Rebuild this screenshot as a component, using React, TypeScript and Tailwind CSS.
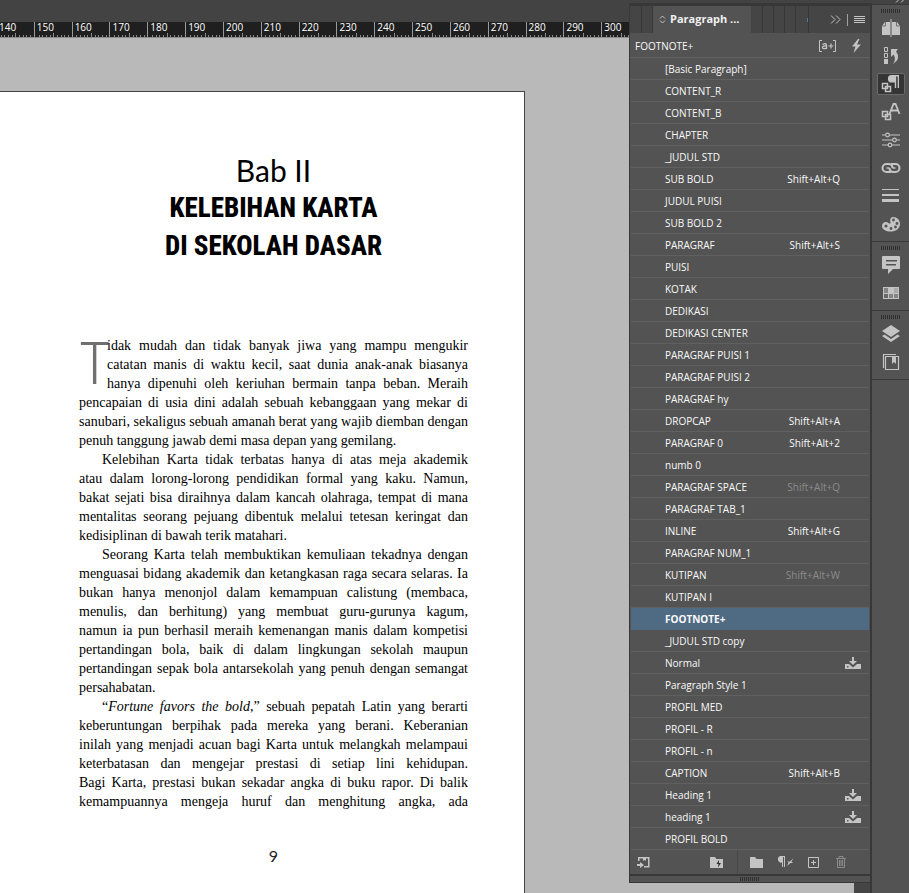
import { ReactNode } from "react";
import clsx from "clsx";

interface StyleItem {
  name: string;
  shortcut?: string;
  muted?: boolean;
  imported?: boolean;
}

const styles: StyleItem[] = [
  { name: "[Basic Paragraph]" },
  { name: "CONTENT_R" },
  { name: "CONTENT_B" },
  { name: "CHAPTER" },
  { name: "_JUDUL STD" },
  { name: "SUB BOLD", shortcut: "Shift+Alt+Q" },
  { name: "JUDUL PUISI" },
  { name: "SUB BOLD 2" },
  { name: "PARAGRAF", shortcut: "Shift+Alt+S" },
  { name: "PUISI" },
  { name: "KOTAK" },
  { name: "DEDIKASI" },
  { name: "DEDIKASI CENTER" },
  { name: "PARAGRAF PUISI 1" },
  { name: "PARAGRAF PUISI 2" },
  { name: "PARAGRAF hy" },
  { name: "DROPCAP", shortcut: "Shift+Alt+A" },
  { name: "PARAGRAF 0", shortcut: "Shift+Alt+2" },
  { name: "numb 0" },
  { name: "PARAGRAF SPACE", shortcut: "Shift+Alt+Q", muted: true },
  { name: "PARAGRAF TAB_1" },
  { name: "INLINE", shortcut: "Shift+Alt+G" },
  { name: "PARAGRAF NUM_1" },
  { name: "KUTIPAN", shortcut: "Shift+Alt+W", muted: true },
  { name: "KUTIPAN I" },
  { name: "FOOTNOTE+" },
  { name: "_JUDUL STD copy" },
  { name: "Normal", imported: true },
  { name: "Paragraph Style 1" },
  { name: "PROFIL MED" },
  { name: "PROFIL - R" },
  { name: "PROFIL - n" },
  { name: "CAPTION", shortcut: "Shift+Alt+B" },
  { name: "Heading 1", imported: true },
  { name: "heading 1", imported: true },
  { name: "PROFIL BOLD" },
];

const rulerMarks = [140, 150, 160, 170, 180, 190, 200, 210, 220, 230, 240, 250, 260, 270, 280, 290, 300];

interface ParagraphProps {
  lines: ReactNode[];
  // the page ends in the middle of the last paragraph
  continues?: boolean;
}

const Line = ({ children, last }: { children: ReactNode; last?: boolean }) => (
  <span className={clsx("block whitespace-nowrap", !last && "[text-align-last:justify]")}>
    {children}{" "}
  </span>
);

const Paragraph = ({ lines, continues }: ParagraphProps) => (
  <p className="indent-[23px]">
    {lines.map((line, i) => (
      <span key={i} className={clsx("block", i > 0 && "indent-0")}>
        <Line last={!continues && i === lines.length - 1}>{line}</Line>
      </span>
    ))}
  </p>
);

const Ruler = () => (
  <div className="h-4 border-b border-[#8c8c8c] bg-[#1f1f1f]">
    <div className="-ml-1 flex h-full w-[643px]">
      {rulerMarks.map((mark) => (
        <div key={mark} className="grid min-w-0 flex-1 border-l border-[#9a9a9a]">
          <span className="col-start-1 row-start-1 pl-0.5 text-[10px] leading-[11px] text-white">{mark}</span>
          <div className="col-start-1 row-start-1 grid grid-cols-10 items-end">
            {Array.from({ length: 10 }, (_, i) => (
              <i
                key={i}
                className={clsx("border-[#8c8c8c]", i > 0 && "border-l", i === 5 ? "h-1" : "h-0.5")}
              />
            ))}
          </div>
        </div>
      ))}
    </div>
  </div>
);

const BookPage = () => (
  <article className="mt-[53px] h-full w-[525px] border-t border-r border-[#444] bg-white pr-14 pl-[79px] text-black">
    <header className="pt-[59px] text-center">
      <p className="font-['Lato',sans-serif] text-[30px] leading-[38px]">Bab II</p>
      <h1 className="font-['Roboto_Condensed',Roboto,sans-serif] text-[27px] leading-[38px] font-extrabold">
        KELEBIHAN KARTA
        <br />
        DI SEKOLAH DASAR
      </h1>
    </header>
    <div className="mt-[71px] font-['Liberation_Serif',serif] text-[14px] leading-[19px]">
      <p>
        <span className="float-left h-[57px] w-7 font-['Roboto_Condensed',Roboto,sans-serif] text-[60px] leading-[55px] font-light text-[#707070]">
          T
        </span>
        <Line>idak mudah dan tidak banyak jiwa yang mampu mengukir</Line>
        <Line>catatan manis di waktu kecil, saat dunia anak-anak biasanya</Line>
        <Line>hanya dipenuhi oleh keriuhan bermain tanpa beban. Meraih</Line>
        <Line>pencapaian di usia dini adalah sebuah kebanggaan yang mekar di</Line>
        <Line>sanubari, sekaligus sebuah amanah berat yang wajib diemban dengan</Line>
        <Line last>penuh tanggung jawab demi masa depan yang gemilang.</Line>
      </p>
      <Paragraph
        lines={[
          "Kelebihan Karta tidak terbatas hanya di atas meja akademik",
          "atau dalam lorong-lorong pendidikan formal yang kaku. Namun,",
          "bakat sejati bisa diraihnya dalam kancah olahraga, tempat di mana",
          "mentalitas seorang pejuang dibentuk melalui tetesan keringat dan",
          "kedisiplinan di bawah terik matahari.",
        ]}
      />
      <Paragraph
        lines={[
          "Seorang Karta telah membuktikan kemuliaan tekadnya dengan",
          "menguasai bidang akademik dan ketangkasan raga secara selaras. Ia",
          "bukan hanya menonjol dalam kemampuan calistung (membaca,",
          "menulis, dan berhitung) yang membuat guru-gurunya kagum,",
          "namun ia pun berhasil meraih kemenangan manis dalam kompetisi",
          "pertandingan bola, baik di dalam lingkungan sekolah maupun",
          "pertandingan sepak bola antarsekolah yang penuh dengan semangat",
          "persahabatan.",
        ]}
      />
      <Paragraph
        continues
        lines={[
          <>
            “<em>Fortune favors the bold</em>,” sebuah pepatah Latin yang berarti
          </>,
          "keberuntungan berpihak pada mereka yang berani. Keberanian",
          "inilah yang menjadi acuan bagi Karta untuk melangkah melampaui",
          "keterbatasan dan mengejar prestasi di setiap lini kehidupan.",
          "Bagi Karta, prestasi bukan sekadar angka di buku rapor. Di balik",
          "kemampuannya mengeja huruf dan menghitung angka, ada",
        ]}
      />
    </div>
    <footer className="mt-9 text-center font-['Lato',sans-serif] text-base leading-[18px] text-[#222]">9</footer>
  </article>
);

const ImportedIcon = () => (
  <svg width="16" height="12" viewBox="0 0 16 12" fill="#c4c4c4">
    <path d="M7 0h2v4h3L8 8 4 4h3z" />
    <path d="M0 7h4l4 3.5L12 7h4v5H0z" />
    <path d="M2 9h1.500v1.500H2z" fill="#535353" />
  </svg>
);

const StyleRow = ({ item }: { item: StyleItem }) => {
  const selected = item.name === "FOOTNOTE+";
  return (
    <li>
      <button
        className={clsx(
          "flex h-[22px] w-full items-center border-b pr-[29px] pl-[34px] text-left leading-4",
          selected ? "border-[#4f6b84] bg-[#4f6b84] font-bold" : "border-[#606060]",
        )}
      >
        <span className="flex-1">{item.name}</span>
        {item.shortcut && (
          <span className={item.muted ? "text-[#8c8c8c]" : undefined}>{item.shortcut}</span>
        )}
        {item.imported && (
          <span className="-mr-[21px]">
            <ImportedIcon />
          </span>
        )}
      </button>
    </li>
  );
};

const Grip = () => (
  <svg width="20" height="4" viewBox="0 0 20 4" shapeRendering="crispEdges">
    {Array.from({ length: 10 }, (_, i) => (
      <rect key={i} x={i * 2} y="0" width="1" height="4" fill="#303030" />
    ))}
  </svg>
);

const PanelTabs = () => (
  <div className="flex h-[27px] items-stretch bg-[#454545]">
    <div className="w-3 border-r border-[#383838]" />
    <div className="w-[11px] border-r border-[#383838]" />
    <button className="flex w-[98px] items-center gap-1 bg-[#535353] pl-1.5 text-[11px] font-bold text-[#f0f0f0]">
      <svg width="7" height="9" viewBox="0 0 7 9" fill="none" stroke="#c4c4c4">
        <path d="M1 3.500 3.500 1 6 3.500M1 5.500 3.500 8 6 5.500" />
      </svg>
      Paragraph ...
    </button>
    <div className="w-3 border-r border-[#383838]" />
    <div className="w-[11px] border-r border-[#383838]" />
    <div className="w-[11px] border-r border-[#383838]" />
    <div className="w-[11px] border-r border-[#383838]" />
    <div className="flex w-[13px] items-center justify-end border-r border-[#383838]">
      <i className="h-1 w-px bg-[#4d7fa8]" />
    </div>
    <div className="flex flex-1 items-center justify-end gap-1.5 pr-[5px]">
      <button aria-label="Collapse">
        <svg width="11" height="9" viewBox="0 0 11 9" fill="none" stroke="#c4c4c4">
          <path d="M1 .5 5 4.500 1 8.500M6 .5l4 4-4 4" />
        </svg>
      </button>
      <i className="h-3 w-px bg-[#a0a0a0]" />
      <button aria-label="Panel menu">
        <svg width="11" height="9" viewBox="0 0 11 9" fill="#c4c4c4" shapeRendering="crispEdges">
          <path d="M0 1h11v1H0zM0 3h11v1H0zM0 5h11v1H0zM0 7h11v1H0z" />
        </svg>
      </button>
    </div>
  </div>
);

const PanelFooter = () => (
  <div className="flex h-6 items-center pr-6 pl-[7px]">
    <button aria-label="Load styles">
      <svg width="13" height="13" viewBox="0 0 13 13" fill="#c4c4c4">
        <path d="M1 1h11.500v10.500H7V10h4V2.500H9V5L7.500 4 6 5V2.500H2.500V5H1z" />
        <path d="M0 8h3V6l4 3-4 3v-2H0z" />
      </svg>
    </button>
    <span className="flex-1" />
    <button aria-label="Library folder">
      <svg width="13" height="11" viewBox="0 0 13 11" fill="#c4c4c4">
        <path d="M0 0h5l1.500 2H13v9H0z" />
        <path d="M9 3 6.500 7h2L8 10.500 11 6H9z" fill="#333" />
      </svg>
    </button>
    <i className="mr-3 ml-[14px] h-6 w-px bg-[#474747]" />
    <button aria-label="New style group" className="mr-[14px]">
      <svg width="13" height="11" viewBox="0 0 13 11" fill="#c4c4c4">
        <path d="M0 0h5l1.500 2H13v9H0z" />
      </svg>
    </button>
    <button aria-label="Clear overrides" className="mr-[14px]">
      <svg width="17" height="12" viewBox="0 0 17 12" fill="#c4c4c4">
        <path d="M3.500 0H8v11H7V1H6v10H5V6.500A3.200 3.200 0 0 1 3.500 0z" />
        <path d="m10 10 1.500-3.500L10 5.500l3 0L16.500 2 14.500 5.500l1.500 1.500h-2.500z" />
      </svg>
    </button>
    <button aria-label="New style" className="mr-[17px]">
      <svg width="11" height="11" viewBox="0 0 11 11" fill="none" stroke="#c4c4c4">
        <path d="M.5.5h10v10H.5zM5.500 3v5M3 5.500h5" />
      </svg>
    </button>
    <button aria-label="Delete style">
      <svg width="10" height="12" viewBox="0 0 10 12" fill="none" stroke="#8a8a8a">
        <path d="M0 2.500h10M3 2V.5h4V2M1.500 3v8.500h7V3M3.500 4v6M5 4v6M6.500 4v6" />
      </svg>
    </button>
  </div>
);

const StylesPanel = () => (
  <section className="border-t-[3px] border-r-2 border-b border-l border-[#383838] bg-[#535353] font-['Open_Sans','Noto_Sans',sans-serif] text-[10px] text-[#fafafa]">
    <PanelTabs />
    <div className="flex h-[25px] items-center border-b border-[#606060] pt-0.5 pr-[9px] pl-[5px]">
      <span className="flex-1">FOOTNOTE+</span>
      <button aria-label="Style override highlighter" className="mr-4">
        <svg width="17" height="12" viewBox="0 0 17 12" fill="none" stroke="#c4c4c4">
          <path d="M3 .5H.5v11H3M14 .5h2.500v11H14" />
          <path d="M3.500 4.500Q7.500 2.500 7.500 5.500V9M7.500 6Q3.500 5.500 3.500 7.500T7.500 8.200" strokeWidth="1.300" />
          <path d="M9.500 6h5M12 3.500v5" strokeWidth="1.200" />
        </svg>
      </button>
      <button aria-label="Quick apply">
        <svg width="9" height="14" viewBox="0 0 9 14" fill="#c4c4c4">
          <path d="M6 0 0 7.500h3.500L1.500 14 9 5.500H5L7.500 0z" />
        </svg>
      </button>
    </div>
    <ul className="px-px">
      {styles.map((item) => (
        <StyleRow key={item.name} item={item} />
      ))}
    </ul>
    <PanelFooter />
    <div className="flex h-2 justify-center border-t-2 border-[#383838] pt-px">
      <Grip />
    </div>
  </section>
);

const Glyph = ({ children }: { children: ReactNode }) => (
  <svg width="20" height="20" viewBox="0 0 20 20" fill="#c4c4c4">
    {children}
  </svg>
);

const squares = <path d="M1.500 9.500h5v5h-5zM4.500 12.500h5v5h-5z" fill="none" stroke="#c4c4c4" strokeWidth="1.500" />;

const dockGroups: { label: string; icon: ReactNode }[][] = [
  [
    {
      label: "Pages",
      icon: (
        <>
          <path d="M1 8 4 4h5v13H1zM19 8l-3-4h-5v13h8z" />
          <path d="M9.500 1h1v18h-1z" />
          <path d="M1 8h3.500V4M19 8h-3.500V4" fill="none" stroke="#535353" strokeWidth=".7" />
        </>
      ),
    },
    {
      label: "Character styles",
      icon: (
        <>
          <path d="M3.500 1.500h3v4h-3zM3.500 7.500h3v4h-3z" fill="none" stroke="#c4c4c4" />
          <path d="M3 13h4v5H3z" />
          <path d="M10 3h7l-2 2.500q4 5 .5 9.500L12 18q3.500-5 .5-9.500L10 11z" />
        </>
      ),
    },
    {
      label: "Paragraph styles",
      icon: (
        <>
          {squares}
          <path d="M10.500 1H18v13h-1.300V2.500h-1.500V14h-1.400V8.500h-3a3.700 3.700 0 0 1-.3-7.500z" />
        </>
      ),
    },
    {
      label: "Character",
      icon: (
        <>
          {squares}
          <path d="m8.500 12 4-10h2l4 10M10 8.500h7" fill="none" stroke="#c4c4c4" strokeWidth="1.800" />
        </>
      ),
    },
    {
      label: "Properties",
      icon: (
        <g fill="none" stroke="#c4c4c4" strokeWidth="1.200">
          <path d="M1 5h3.500M8.500 5H19M1 10h10.500M15.500 10H19M1 15h6M11 15h8" />
          <circle cx="6.500" cy="5" r="1.800" />
          <circle cx="13.500" cy="10" r="1.800" />
          <circle cx="9" cy="15" r="1.800" />
        </g>
      ),
    },
    {
      label: "Links",
      icon: (
        <g fill="none" stroke="#c4c4c4" strokeWidth="2">
          <path d="M10 14H5.500a3.800 3.800 0 0 1 0-8H8q3.500.5 3.500 4" />
          <path d="M10 6h4.500a3.800 3.800 0 0 1 0 8H12q-3.500-.5-3.500-4" />
          <path d="M5.500 10h3M11.500 10h3" strokeWidth="1.500" />
        </g>
      ),
    },
    {
      label: "Stroke",
      icon: <path d="M1 3h17v1H1zM1 8h17v2H1zM1 13h17v3H1z" />,
    },
    {
      label: "Color",
      icon: (
        <>
          <path d="M12 3c4 0 7 3 7 7 0 5-5 7.500-9 7.500-5 0-9-2-9-5.500 0-2.500 2-4 4-4 2.500 0 2 2 4 1.500 1.500-.5 0-2 .2-3.500C9.500 4 10.500 3 12 3z" />
          <g fill="#535353">
            <circle cx="12.500" cy="6" r="1.400" />
            <circle cx="16" cy="9.500" r="1.400" />
            <circle cx="14.500" cy="13" r="1.400" />
            <circle cx="10" cy="14.500" r="1.400" />
            <circle cx="5" cy="12" r="1.600" />
          </g>
        </>
      ),
    },
  ],
  [
    {
      label: "Notes",
      icon: (
        <>
          <path d="M2 1h16q1 0 1 1v11q0 1-1 1h-6l-5 5v-5H2q-1 0-1-1V2q0-1 1-1z" />
          <path d="M5 5h11v1.500H5zM5 9h10v1.500H5z" fill="#535353" />
        </>
      ),
    },
    {
      label: "Swatches",
      icon: (
        <>
          <path d="M2 4h16v12H2z" />
          <path d="M3 5h4v5H3zM13 11h4v4h-4z" fill="#858585" />
          <path d="M8 11h4v4H8z" fill="#858585" />
          <path d="M3 11h4v4H3z" fill="#686868" />
          <path d="M13 5h4v5h-4z" fill="#aaa" />
        </>
      ),
    },
  ],
  [
    {
      label: "Layers",
      icon: (
        <>
          <path d="m10 1 9 6-9 6-9-6z" />
          <path d="m1 12 2.500-1.500L10 15l6.500-4.500L19 12l-9 6z" />
        </>
      ),
    },
    {
      label: "Libraries",
      icon: (
        <>
          <path d="M4.500 4.500h13v13h-13zM15 2.500H2.500V16" fill="none" stroke="#c4c4c4" strokeWidth="1.200" />
          <path d="M11 4h4v8l-2-2-2 2z" />
        </>
      ),
    },
  ],
];

const Dock = () => (
  <aside className="flex w-[37px] shrink-0 flex-col bg-[#535353]">
    <div className="flex h-[5px] items-start justify-end border-b border-[#383838] bg-[#434343] pr-1">
      <svg width="10" height="3" viewBox="0 0 10 3" fill="none" stroke="#c4c4c4">
        <path d="M3.500 0 1 2.500M8.500 0 6 2.500" />
      </svg>
    </div>
    {dockGroups.map((group, i) => (
      <div key={i} className="flex flex-col items-center border-b border-[#383838] pt-1 pb-1.5">
        <Grip />
        <div className="mt-1 flex flex-col gap-1.5">
          {group.map(({ label, icon }) => (
            <button
              key={label}
              aria-label={label}
              className={clsx(
                "flex h-[22px] w-7 items-center justify-center rounded-xs border",
                label === "Paragraph styles" ? "border-[#6a6a6a] bg-[#353535]" : "border-transparent",
              )}
            >
              <Glyph>{icon}</Glyph>
            </button>
          ))}
        </div>
      </div>
    ))}
  </aside>
);

export default function App() {
  return (
    <div className="flex h-screen min-h-[893px] overflow-hidden bg-[#b9b9b9]">
      <main className="flex min-w-0 flex-1 flex-col overflow-hidden font-['Open_Sans','Noto_Sans',sans-serif]">
        <div className="h-[22px] shrink-0 bg-[#434343]" />
        <Ruler />
        <div className="min-h-0 flex-1 overflow-hidden">
          <BookPage />
        </div>
      </main>
      <div className="flex w-[243px] shrink-0 flex-col">
        <div className="h-[3px] bg-[#434343]" />
        <StylesPanel />
        <div className="flex flex-1 justify-end">
          <div className="w-[18px] border-r-2 border-[#383838] bg-[#454545]" />
        </div>
      </div>
      <Dock />
    </div>
  );
}
